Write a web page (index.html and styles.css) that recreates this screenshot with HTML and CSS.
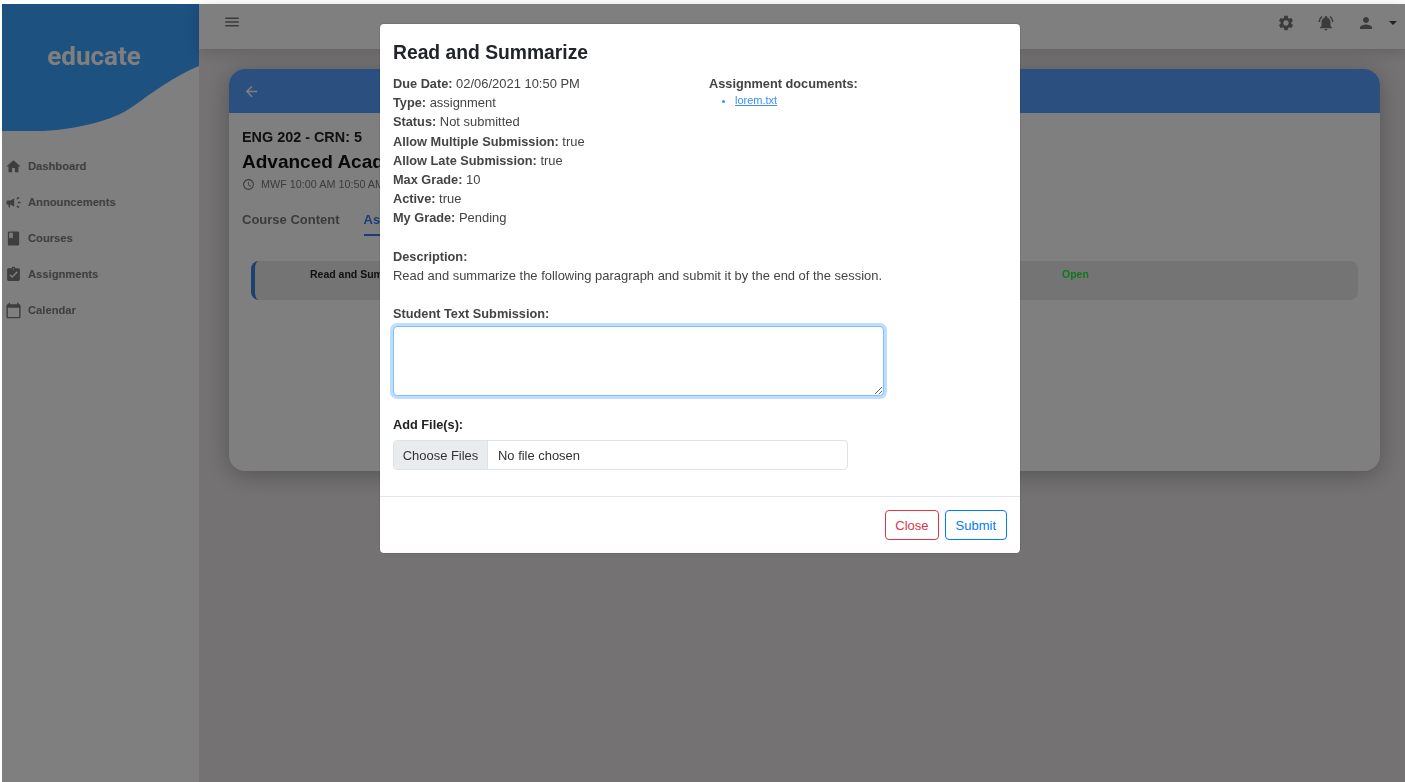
FILE: index.html
```html
<!DOCTYPE html>
<html lang="en">
<head>
<meta charset="utf-8">
<title>educate</title>
<link rel="stylesheet" href="styles.css">
</head>
<body>
<div class="app">
  <aside class="sidebar">
    <div class="brand">
      <svg class="wave" viewBox="0 0 197 127" preserveAspectRatio="none"><path d="M0 0H197V62C172 72 150 89 130 103C103 122 50 130 0 127Z"/></svg>
      <span class="brand-name">educate</span>
    </div>
    <nav class="nav">
      <a class="nav-item"><svg class="nav-icon" viewBox="0 0 24 24"><path d="M10 20v-6h4v6h5v-8h3L12 3 2 12h3v8z"/></svg>Dashboard</a>
      <a class="nav-item"><svg class="nav-icon" viewBox="0 0 24 24"><path d="M18 11v2h4v-2h-4zm-2 6.61c.96.71 2.21 1.65 3.2 2.39.4-.53.8-1.07 1.2-1.6-.99-.74-2.24-1.68-3.2-2.4-.4.54-.8 1.08-1.2 1.61zM20.4 5.6c-.4-.53-.8-1.07-1.2-1.6-.99.74-2.24 1.68-3.2 2.4.4.53.8 1.07 1.2 1.6.96-.72 2.21-1.65 3.2-2.4zM4 9c-1.1 0-2 .9-2 2v2c0 1.1.9 2 2 2h1v4h2v-4h1l5 3V6L8 9H4z"/></svg>Announcements</a>
      <a class="nav-item"><svg class="nav-icon" viewBox="0 0 24 24"><path d="M18 2H6c-1.1 0-2 .9-2 2v16c0 1.1.9 2 2 2h12c1.1 0 2-.9 2-2V4c0-1.1-.9-2-2-2zM6 4h5v8l-2.5-1.5L6 12V4z"/></svg>Courses</a>
      <a class="nav-item"><svg class="nav-icon" viewBox="0 0 24 24"><path d="M19 3h-4.18C14.4 1.84 13.3 1 12 1c-1.3 0-2.4.84-2.82 2H5c-1.1 0-2 .9-2 2v14c0 1.1.9 2 2 2h14c1.1 0 2-.9 2-2V5c0-1.1-.9-2-2-2zm-7 0c.55 0 1 .45 1 1s-.45 1-1 1-1-.45-1-1 .45-1 1-1zm-2 14l-4-4 1.41-1.41L10 14.17l6.59-6.59L18 9l-8 8z"/></svg>Assignments</a>
      <a class="nav-item"><svg class="nav-icon" viewBox="0 0 24 24"><path d="M20 3h-1V1h-2v2H7V1H5v2H4c-1.1 0-2 .9-2 2v16c0 1.1.9 2 2 2h16c1.1 0 2-.9 2-2V5c0-1.1-.9-2-2-2zm0 18H4V8h16v13z"/></svg>Calendar</a>
    </nav>
  </aside>
  <div class="content">
    <header class="topbar">
      <svg class="menu-icon" viewBox="0 0 24 24"><path d="M3 18h18v-2H3v2zm0-5h18v-2H3v2zm0-7v2h18V6H3z"/></svg>
      <div class="top-actions">
        <svg class="top-icon" viewBox="0 0 24 24"><path d="M19.14 12.94c.04-.3.06-.61.06-.94 0-.32-.02-.64-.07-.94l2.03-1.58c.18-.14.23-.41.12-.61l-1.92-3.32c-.12-.22-.37-.29-.59-.22l-2.39.96c-.5-.38-1.03-.7-1.62-.94l-.36-2.54c-.04-.24-.24-.41-.48-.41h-3.84c-.24 0-.43.17-.47.41l-.36 2.54c-.59.24-1.13.57-1.62.94l-2.39-.96c-.22-.08-.47 0-.59.22L2.74 8.87c-.12.21-.08.47.12.61l2.03 1.58c-.05.3-.09.63-.09.94s.02.64.07.94l-2.03 1.58c-.18.14-.23.41-.12.61l1.92 3.32c.12.22.37.29.59.22l2.39-.96c.5.38 1.03.7 1.62.94l.36 2.54c.05.24.24.41.48.41h3.84c.24 0 .44-.17.47-.41l.36-2.54c.59-.24 1.13-.56 1.62-.94l2.39.96c.22.08.47 0 .59-.22l1.92-3.32c.12-.22.07-.47-.12-.61l-2.01-1.58zM12 15.6c-1.98 0-3.6-1.62-3.6-3.6s1.62-3.6 3.6-3.6 3.6 1.62 3.6 3.6-1.62 3.6-3.6 3.6z"/></svg>
        <svg class="top-icon" viewBox="0 0 24 24"><path d="M7.58 4.08L6.15 2.65C3.75 4.48 2.17 7.3 2.03 10.5h2c.15-2.65 1.51-4.97 3.55-6.42zm12.39 6.42h2c-.15-3.2-1.73-6.02-4.12-7.85l-1.42 1.43c2.02 1.45 3.39 3.77 3.54 6.42zM18 11c0-3.07-1.64-5.64-4.5-6.32V4c0-.83-.67-1.5-1.5-1.5s-1.5.67-1.5 1.5v.68C7.63 5.36 6 7.92 6 11v5l-2 2v1h16v-1l-2-2v-5zm-6 11c.14 0 .27-.01.4-.04.65-.14 1.18-.58 1.44-1.18.1-.24.15-.5.15-.78h-4c.01 1.1.9 2 2.01 2z"/></svg>
        <div class="user">
          <svg class="top-icon" viewBox="0 0 24 24"><path d="M12 12c2.21 0 4-1.79 4-4s-1.79-4-4-4-4 1.79-4 4 1.79 4 4 4zm0 2c-2.67 0-8 1.34-8 4v2h16v-2c0-2.66-5.33-4-8-4z"/></svg>
          <span class="caret"></span>
        </div>
      </div>
    </header>
    <main class="main">
      <section class="card">
        <div class="card-head">
          <svg class="back-icon" viewBox="0 0 24 24"><path d="M20 11H7.83l5.59-5.59L12 4l-8 8 8 8 1.41-1.41L7.83 13H20v-2z"/></svg>
        </div>
        <div class="card-body">
          <div class="course-code">ENG 202 - CRN: 5</div>
          <h1 class="course-title">Advanced Academic Writing</h1>
          <div class="course-time">
            <svg class="clock-icon" viewBox="0 0 24 24"><path d="M11.99 2C6.47 2 2 6.48 2 12s4.47 10 9.99 10C17.52 22 22 17.52 22 12S17.52 2 11.99 2zM12 20c-4.42 0-8-3.58-8-8s3.58-8 8-8 8 3.58 8 8-3.58 8-8 8zm.5-13H11v6l5.25 3.15.75-1.23-4.5-2.67z"/></svg>
            MWF 10:00 AM 10:50 AM
          </div>
          <div class="tabs">
            <span class="tab">Course Content</span>
            <span class="tab tab-active">Assignments</span>
          </div>
          <div class="row">
            <span class="row-name">Read and Summarize</span>
            <span class="row-status">Open</span>
          </div>
        </div>
      </section>
    </main>
  </div>
  <div class="backdrop"></div>
  <div class="modal">
    <div class="modal-body">
      <h2 class="modal-title">Read and Summarize</h2>
      <div class="details">
        <div class="details-main">
          <div><b>Due Date:</b> 02/06/2021 10:50 PM</div>
          <div><b>Type:</b> assignment</div>
          <div><b>Status:</b> Not submitted</div>
          <div><b>Allow Multiple Submission:</b> true</div>
          <div><b>Allow Late Submission:</b> true</div>
          <div><b>Max Grade:</b> 10</div>
          <div><b>Active:</b> true</div>
          <div><b>My Grade:</b> Pending</div>
        </div>
        <div class="details-docs">
          <b>Assignment documents:</b>
          <ul class="doc-list"><li><a class="doc-link">lorem.txt</a></li></ul>
        </div>
      </div>
      <div class="description">
        <div><b>Description:</b></div>
        <div>Read and summarize the following paragraph and submit it by the end of the session.</div>
      </div>
      <label class="field-label">Student Text Submission:</label>
      <textarea class="answer"></textarea>
      <label class="field-label files-label">Add File(s):</label>
      <div class="file-input">
        <span class="file-button">Choose Files</span>
        <span class="file-name">No file chosen</span>
      </div>
    </div>
    <div class="modal-foot">
      <button class="btn btn-close">Close</button>
      <button class="btn btn-submit">Submit</button>
    </div>
  </div>
</div>
</body>
</html>
```
FILE: styles.css
```css
* { box-sizing: border-box; }
html, body { margin: 0; height: 100%; background: #fff; overflow: hidden; }
body { padding: 4px 0 0 2px; font-family: "Liberation Sans", Arial, sans-serif; }
.app { position: relative; display: flex; height: 778px; filter: blur(.4px); }

.sidebar { width: 197px; flex: none; background: #fff; }
.brand { position: relative; height: 127px; display: flex; justify-content: center; padding-right: 13px; }
.wave { position: absolute; inset: 0; width: 100%; height: 100%; }
.wave path { fill: #3ba2ff; }
.brand-name { position: relative; margin-top: 36px; font: 700 26px/32px Roboto, sans-serif; color: #fff; }
.nav { display: flex; flex-direction: column; padding: 17px 0 0 3px; }
.nav-item { display: flex; align-items: center; gap: 6px; height: 36px; font-size: 11.2px; font-weight: 700; color: #7c7c7c; }
.nav-icon { width: 17px; height: 17px; fill: #7c7c7c; flex: none; }

.content { flex: 1; display: flex; flex-direction: column; background: #e9e5e5; min-width: 0; }
.topbar { position: relative; height: 45px; flex: none; display: flex; justify-content: space-between; align-items: flex-start; padding: 10px 8px 0 24px; background: #fff; box-shadow: 0 3px 14px rgba(0,0,0,.16); }
.menu-icon { width: 18px; height: 18px; fill: #777; margin-top: -1px; }
.top-actions { display: flex; align-items: center; gap: 22px; }
.top-icon { width: 18px; height: 18px; fill: #777; display: block; }
.user { display: flex; align-items: center; gap: 14px; }
.caret { width: 0; height: 0; border: 4px solid transparent; border-top-color: #444; border-bottom: 0; }

.main { flex: 1; padding: 20px 25px 0 30px; }
.card { height: 402px; background: #fff; border-radius: 16px; box-shadow: 0 4px 24px rgba(0,0,0,.28); }
.card-head { height: 44px; background: #57a0ff; border-radius: 16px 16px 0 0; display: flex; align-items: center; padding-left: 14px; }
.back-icon { width: 17px; height: 17px; fill: #fff; }
.card-body { padding: 16px 22px 0 13px; }
.course-code { font-size: 14.4px; line-height: 17px; font-weight: 700; color: #222; }
.course-title { margin: 5px 0 0; font-size: 19px; line-height: 22px; font-weight: 700; color: #111; white-space: nowrap; }
.course-time { display: flex; align-items: center; gap: 6px; margin-top: 4px; font-size: 10.8px; line-height: 14px; color: #777; white-space: nowrap; }
.clock-icon { width: 13px; height: 13px; fill: #777; }
.tabs { display: flex; gap: 24px; margin-top: 21px; }
.tab { font-size: 13px; line-height: 16px; font-weight: 700; color: #777; padding-bottom: 6px; }
.tab-active { color: #2f80ed; border-bottom: 2px solid #2f80ed; }
.row { display: flex; height: 39px; margin: 25px 0 0 9px; padding: 6px 0 0 55px; background: #e8e8e8; border-left: 4px solid #3b82e0; border-radius: 8px; font-size: 10.5px; line-height: 14px; font-weight: 700; }
.row-name { width: 752px; color: #222; }
.row-status { color: #22f03a; }

.backdrop { position: absolute; inset: 0; background: rgba(0,0,0,.5); }

.modal { position: absolute; left: 378px; top: 20px; width: 640px; height: 529px; display: flex; flex-direction: column; background: #fff; border-radius: 4px; box-shadow: 0 0 0 1px rgba(0,0,0,.08); font-size: 12.95px; line-height: 19.2px; color: #444; }
.modal b { font-size: 12.75px; }
.modal-body { flex: 1; padding: 16px 13px 0; }
.modal-title { margin: 0; font-size: 19.3px; line-height: 25px; font-weight: 700; color: #212529; }
.details { display: flex; margin-top: 9px; }
.details-main { width: 316px; flex: none; }
.details-docs { flex: 1; }
.doc-list { margin: 0; padding: 0 0 0 26px; font-size: 11px; line-height: 14px; color: #3b8eff; }
.doc-link { color: #3b8eff; text-decoration: underline; }
.description { margin-top: 19px; }
.field-label { display: block; margin-top: 19px; font-size: 12.75px; font-weight: 700; }
.answer { display: block; width: 491px; height: 70px; margin-top: 3px; padding: 6px 12px; border: 1px solid #80bdff; border-radius: 4px; box-shadow: 0 0 0 3px rgba(0,123,255,.25); outline: 0; background: #fff; }
.files-label { margin-top: 19px; color: #222; }
.file-input { display: flex; width: 455px; height: 30px; margin-top: 6px; border: 1px solid #dee2e6; border-radius: 4px; overflow: hidden; color: #333; }
.file-button { width: 94px; flex: none; display: flex; align-items: center; justify-content: center; background: #e9ecef; border-right: 1px solid #dee2e6; }
.file-name { display: flex; align-items: center; padding-left: 10px; }
.modal-foot { height: 57px; flex: none; display: flex; justify-content: flex-end; gap: 6px; padding: 13px 13px 0; border-top: 1px solid #e3e6ea; }
.btn { height: 30px; padding: 0 9px; background: #fff; border-radius: 4px; font: 13px "Liberation Sans", Arial, sans-serif; }
.btn-close { border: 1px solid #dc3545; color: #dc3545; }
.btn-submit { padding: 0 10px; border: 1px solid #007bff; color: #007bff; }
```
